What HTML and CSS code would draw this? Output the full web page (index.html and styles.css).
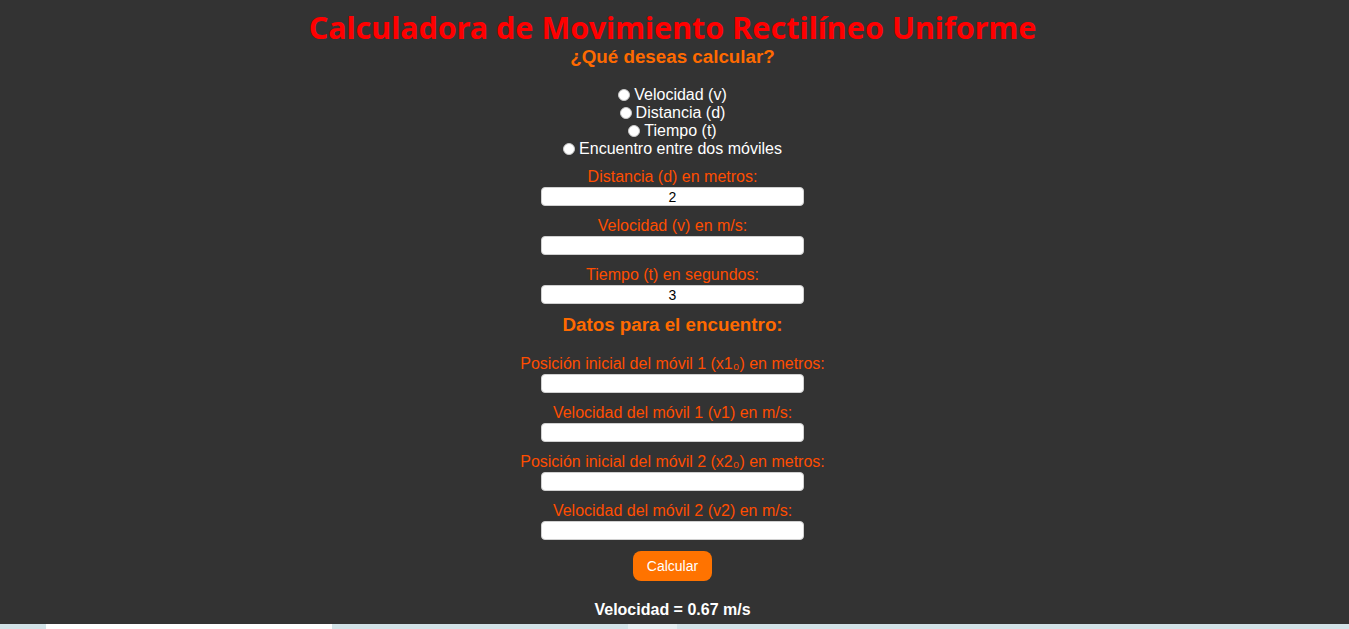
FILE: index.html
```html
<!DOCTYPE html>
<html lang="es">
<head>
<meta charset="utf-8">
<title>Calculadora MRU</title>
<link rel="stylesheet" href="styles.css">
</head>
<body>
<main class="page">
  <h1 class="title">Calculadora de Movimiento Rectilíneo Uniforme</h1>
  <h2 class="subtitle">¿Qué deseas calcular?</h2>
  <div class="options">
    <label class="option"><input type="radio" name="calc" class="radio">Velocidad (v)</label>
    <label class="option"><input type="radio" name="calc" class="radio">Distancia (d)</label>
    <label class="option"><input type="radio" name="calc" class="radio">Tiempo (t)</label>
    <label class="option"><input type="radio" name="calc" class="radio">Encuentro entre dos móviles</label>
  </div>
  <div class="field">
    <label class="field-label">Distancia (d) en metros:</label>
    <input class="field-input" type="text" value="2">
  </div>
  <div class="field">
    <label class="field-label">Velocidad (v) en m/s:</label>
    <input class="field-input" type="text" value="">
  </div>
  <div class="field">
    <label class="field-label">Tiempo (t) en segundos:</label>
    <input class="field-input" type="text" value="3">
  </div>
  <h3 class="section">Datos para el encuentro:</h3>
  <div class="field">
    <label class="field-label">Posición inicial del móvil 1 (x1₀) en metros:</label>
    <input class="field-input" type="text" value="">
  </div>
  <div class="field">
    <label class="field-label">Velocidad del móvil 1 (v1) en m/s:</label>
    <input class="field-input" type="text" value="">
  </div>
  <div class="field">
    <label class="field-label">Posición inicial del móvil 2 (x2₀) en metros:</label>
    <input class="field-input" type="text" value="">
  </div>
  <div class="field">
    <label class="field-label">Velocidad del móvil 2 (v2) en m/s:</label>
    <input class="field-input" type="text" value="">
  </div>
  <button class="calc-btn" type="button">Calcular</button>
  <p class="result">Velocidad = 0.67 m/s</p>
</main>
<footer class="strip">
  <div class="strip-white"></div>
  <div class="strip-light"></div>
</footer>
</body>
</html>
```

FILE: styles.css
```css
html, body {
  margin: 0;
  padding: 0;
}
body {
  background: #333333;
  font-family: "Liberation Sans", Arial, sans-serif;
  color: #ffffff;
  min-height: 629px;
  display: flex;
  flex-direction: column;
}
.page {
  display: flex;
  flex-direction: column;
  align-items: center;
  text-align: center;
  padding-right: 4px;
  height: 624px;
  box-sizing: border-box;
}
.title {
  margin: 8px 0 0;
  font-family: "Noto Sans", "Open Sans", sans-serif;
  font-weight: 700;
  font-size: 30.5px;
  line-height: 38px;
  color: #ff0000;
}
.subtitle {
  margin: 0;
  font-size: 18.8px;
  font-weight: 700;
  line-height: 22px;
  color: #ff6a00;
}
.options {
  margin-top: 18px;
  display: flex;
  flex-direction: column;
  align-items: center;
}
.option {
  display: flex;
  align-items: center;
  font-size: 16px;
  line-height: 18px;
  color: #ffffff;
}
.radio {
  appearance: none;
  -webkit-appearance: none;
  width: 12px;
  height: 12px;
  margin: 0 4px 0 0;
  border-radius: 50%;
  background: #ffffff;
  border: 1px solid #c8c8c8;
  box-sizing: border-box;
}
.field {
  margin-top: 11px;
  display: flex;
  flex-direction: column;
  align-items: center;
}
.options + .field {
  margin-top: 10px;
}
.field-label {
  font-size: 16px;
  line-height: 18px;
  color: #ff4d00;
}
.field-input {
  margin-top: 1px;
  width: 263px;
  height: 19px;
  box-sizing: border-box;
  border: 1px solid #d0d0d0;
  border-radius: 4px;
  background: #ffffff;
  font-family: "Liberation Sans", Arial, sans-serif;
  font-size: 14px;
  color: #000000;
  text-align: center;
  padding: 0 4px;
  outline: none;
}
.section {
  margin: 10px 0 8px;
  font-size: 18.8px;
  font-weight: 700;
  line-height: 22px;
  color: #ff6a00;
}
.calc-btn {
  margin-top: 11px;
  width: 79px;
  height: 30px;
  border: none;
  border-radius: 8px;
  background: #ff7300;
  color: #ffffff;
  font-family: "Liberation Sans", Arial, sans-serif;
  font-size: 14px;
  cursor: pointer;
}
.result {
  margin: 20px 0 0;
  font-size: 16px;
  font-weight: 700;
  line-height: 18px;
  color: #ffffff;
}
.strip {
  flex: 1;
  min-height: 5px;
  background: #d3e3e8;
  display: flex;
}
.strip-white {
  margin-left: 46px;
  width: 286px;
  background: #ffffff;
}
.strip-light {
  margin-left: 296px;
  width: 49px;
  background: #e6eff2;
}
```
